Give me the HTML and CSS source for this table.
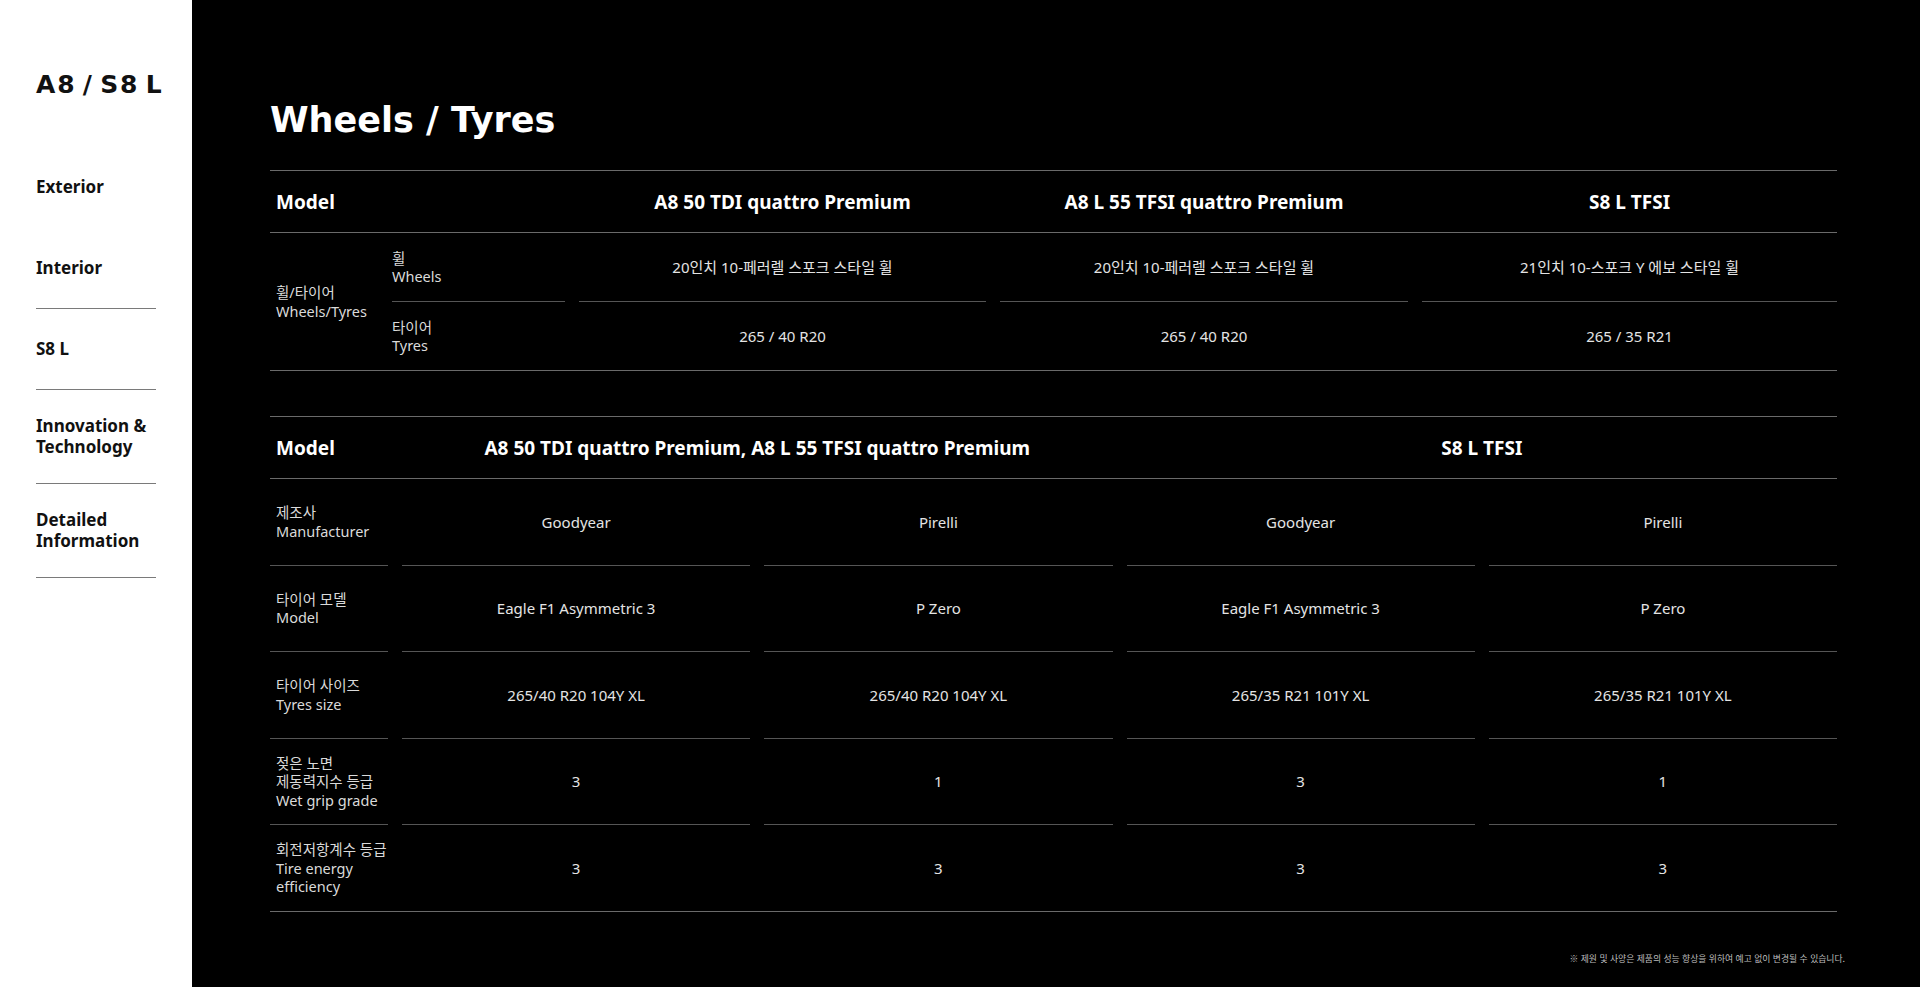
FILE: index.html
```html
<!DOCTYPE html>
<html lang="ko">
<head>
<meta charset="utf-8">
<title>A8 / S8 L - Wheels / Tyres</title>
<link rel="stylesheet" href="styles.css">
</head>
<body>
<aside class="sidebar">
  <div class="brand">A8 / S8 L</div>
  <nav class="nav">
    <div class="nav-item nav-item--first">Exterior</div>
    <div class="nav-item">Interior</div>
    <div class="nav-item">S8 L</div>
    <div class="nav-item">Innovation &amp;<br>Technology</div>
    <div class="nav-item">Detailed<br>Information</div>
  </nav>
</aside>
<main class="main">
  <h1 class="title">Wheels / Tyres</h1>

  <section class="spec spec-wheels">
    <div class="spec-head grid-wheels">
      <div class="head-label span-left">Model</div>
      <div class="head-cell">A8 50 TDI quattro Premium</div>
      <div class="head-cell">A8 L 55 TFSI quattro Premium</div>
      <div class="head-cell">S8 L TFSI</div>
    </div>
    <div class="spec-body grid-wheels">
      <div class="label label--group">휠/타이어<br>Wheels/Tyres</div>
      <div class="sub cell--line">휠<br>Wheels</div>
      <div class="cell cell--line">20인치 10-페러렐 스포크 스타일 휠</div>
      <div class="cell cell--line">20인치 10-페러렐 스포크 스타일 휠</div>
      <div class="cell cell--line">21인치 10-스포크 Y 에보 스타일 휠</div>
      <div class="sub">타이어<br>Tyres</div>
      <div class="cell">265 / 40 R20</div>
      <div class="cell">265 / 40 R20</div>
      <div class="cell">265 / 35 R21</div>
    </div>
  </section>

  <section class="spec spec-tyres">
    <div class="spec-head grid-tyres">
      <div class="head-label">Model</div>
      <div class="head-cell span-2">A8 50 TDI quattro Premium, A8 L 55 TFSI quattro Premium</div>
      <div class="head-cell span-2">S8 L TFSI</div>
    </div>
    <div class="spec-body grid-tyres">
      <div class="label cell--line">제조사<br>Manufacturer</div>
      <div class="cell cell--line">Goodyear</div>
      <div class="cell cell--line">Pirelli</div>
      <div class="cell cell--line">Goodyear</div>
      <div class="cell cell--line">Pirelli</div>

      <div class="label cell--line">타이어 모델<br>Model</div>
      <div class="cell cell--line">Eagle F1 Asymmetric 3</div>
      <div class="cell cell--line">P Zero</div>
      <div class="cell cell--line">Eagle F1 Asymmetric 3</div>
      <div class="cell cell--line">P Zero</div>

      <div class="label cell--line">타이어 사이즈<br>Tyres size</div>
      <div class="cell cell--line">265/40 R20 104Y XL</div>
      <div class="cell cell--line">265/40 R20 104Y XL</div>
      <div class="cell cell--line">265/35 R21 101Y XL</div>
      <div class="cell cell--line">265/35 R21 101Y XL</div>

      <div class="label cell--line">젖은 노면<br>제동력지수 등급<br>Wet grip grade</div>
      <div class="cell cell--line">3</div>
      <div class="cell cell--line">1</div>
      <div class="cell cell--line">3</div>
      <div class="cell cell--line">1</div>

      <div class="label row-last">회전저항계수 등급<br>Tire energy<br>efficiency</div>
      <div class="cell row-last">3</div>
      <div class="cell row-last">3</div>
      <div class="cell row-last">3</div>
      <div class="cell row-last">3</div>
    </div>
  </section>

  <p class="note">※ 제원 및 사양은 제품의 성능 향상을 위하여 예고 없이 변경될 수 있습니다.</p>
</main>
</body>
</html>
```

FILE: styles.css
```css
* { box-sizing: border-box; }

html, body {
  margin: 0;
  padding: 0;
}

body {
  display: flex;
  min-height: 987px;
  background: #000;
  font-family: "Noto Sans", "Noto Sans CJK KR", sans-serif;
  color: #e4e4e4;
}

/* Sidebar */
.sidebar {
  width: 192px;
  flex: 0 0 192px;
  background: #fff;
  padding: 70px 36px 0;
  color: #111;
}

.brand {
  font-family: "DejaVu Sans", sans-serif;
  font-weight: bold;
  font-size: 25px;
  line-height: 30px;
  letter-spacing: 1.8px;
  word-spacing: -4px;
  white-space: nowrap;
  margin: 0 0 47px;
}

.nav {
  display: flex;
  flex-direction: column;
}

.nav-item {
  display: flex;
  align-items: center;
  min-height: 81px;
  padding: 26px 0;
  border-bottom: 1px solid #7a7a7a;
  font-weight: bold;
  font-size: 17px;
  line-height: 20.5px;
}

.nav-item--first {
  border-bottom-color: transparent;
}

/* Main */
.main {
  flex: 1;
  padding: 99px 83px 0 78px;
}

.title {
  margin: 0 0 29px;
  font-family: "DejaVu Sans", sans-serif;
  font-weight: bold;
  font-size: 35px;
  line-height: 42px;
  color: #fff;
}

.spec {
  border-top: 1px solid #6a6a6a;
  border-bottom: 1px solid #6a6a6a;
}

.spec-tyres {
  margin-top: 45px;
}

.grid-wheels {
  display: grid;
  grid-template-columns: 108px 173px 407px 408px 1fr;
  column-gap: 14px;
}

.grid-tyres {
  display: grid;
  grid-template-columns: 118px 1fr 1fr 1fr 1fr;
  column-gap: 14px;
}

.spec-head {
  height: 62px;
  border-bottom: 1px solid #6a6a6a;
  align-items: center;
  font-weight: bold;
  font-size: 19px;
  color: #fff;
}

.head-label {
  padding-left: 6px;
}

.span-left { grid-column: span 2; }
.span-2 { grid-column: span 2; }

.head-cell {
  text-align: center;
  white-space: nowrap;
}

.spec-body {
  font-size: 15px;
  line-height: 18.5px;
}

.label,
.sub,
.cell {
  display: flex;
  align-items: center;
}

.label {
  padding-left: 6px;
  color: #dadada;
  font-size: 14.5px;
}

.label--group {
  grid-row: span 2;
}

.sub {
  color: #dadada;
  font-size: 14.5px;
}

.cell {
  justify-content: center;
  text-align: center;
}

.spec-wheels .sub,
.spec-wheels .cell {
  height: 68px;
}

.spec-wheels .cell--line {
  height: 69px;
}

.cell--line {
  border-bottom: 1px solid #555;
}

.spec-tyres .label,
.spec-tyres .cell {
  height: 86.6px;
}

.spec-tyres .row-last {
  height: 85.6px;
}

.note {
  margin: 41px -8px 0 0;
  text-align: right;
  font-family: "Noto Sans CJK KR", sans-serif;
  font-size: 8.8px;
  line-height: 12px;
  color: #bdbdbd;
}
```
